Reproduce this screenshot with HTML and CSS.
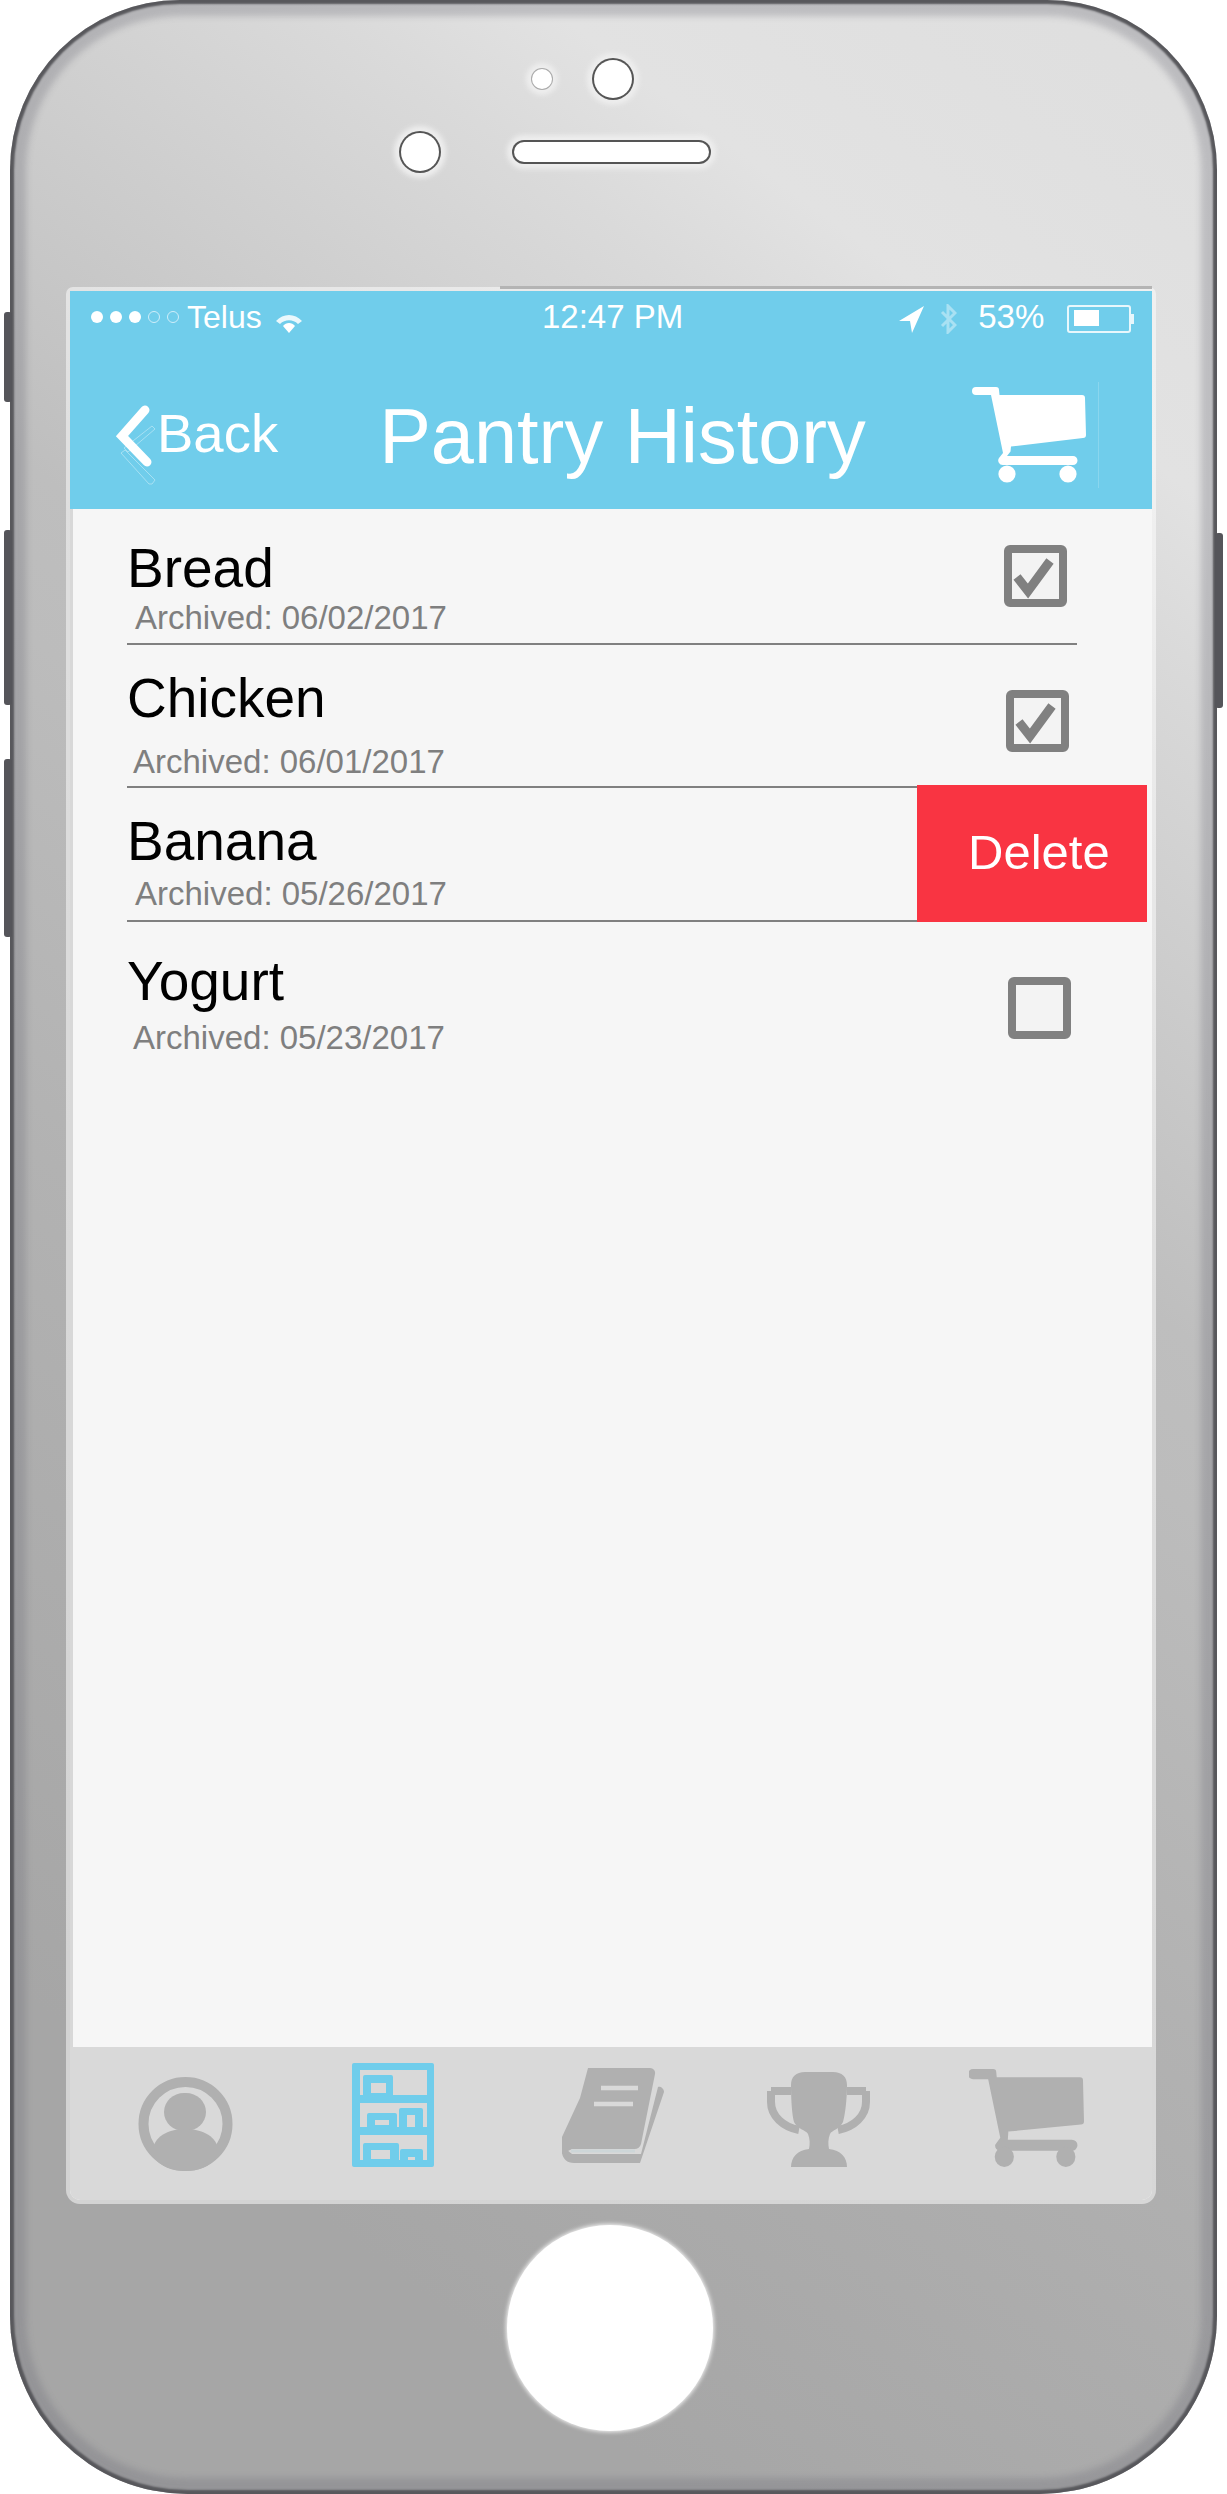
FILE: index.html
```html
<!DOCTYPE html>
<html lang="en">

<head>
    <meta charset="UTF-8">
    <title>Pantry History</title>
    <link rel="stylesheet" href="styles.css">
</head>

<body>
    <div class="side-btn side-btn-mute"></div>
    <div class="side-btn side-btn-up"></div>
    <div class="side-btn side-btn-down"></div>
    <div class="side-btn side-btn-power"></div>
    <div id="phone">
        <div class="bezel-top">
            <div class="sensor-row">
                <div class="sensor sensor-small"></div>
                <div class="sensor sensor-camera"></div>
            </div>
            <div class="sensor-row sensor-row-lower">
                <div class="sensor sensor-front"></div>
                <div class="speaker"></div>
            </div>
        </div>

        <div id="screen">
            <div class="app-header">
                <div class="status-bar">
                    <div class="signal">
                        <span class="dot"></span><span class="dot"></span><span class="dot"></span><span class="dot dot-empty"></span><span class="dot dot-empty"></span>
                    </div>
                    <span class="carrier">Telus</span>
                    <svg class="wifi" viewBox="0 0 26 18">
                        <path d="M0 6 C7 -2 19 -2 26 6 L22 9 C17 4 9 4 4 9 Z" fill="#fff" opacity=".85" />
                        <path d="M7 11 C10 7 16 7 19 11 L13 18 Z" fill="#fff" />
                    </svg>
                    <span class="clock">12:47 PM</span>
                    <svg class="location" viewBox="0 0 25 27">
                        <path d="M25 0 L0 15 L11 15 L13 27 Z" fill="#fff" />
                    </svg>
                    <svg class="bluetooth" viewBox="0 0 17 30">
                        <path d="M2 8 L15 21 L8 28 L8 2 L15 9 L2 22" fill="none" stroke="#fff" stroke-width="3" />
                    </svg>
                    <span class="percent">53%</span>
                    <div class="battery">
                        <div class="battery-fill"></div>
                    </div>
                </div>
                <div class="nav-bar">
                    <svg class="chevron" viewBox="0 0 42 80">
                        <path d="M30 5 L7 31 L32 57" fill="none" stroke="#fff" stroke-width="9" stroke-linecap="round" stroke-linejoin="miter" />
                        <path d="M37 21 l3 3 -27 23 -4-4 z M6 48 l4-3 30 30 -3 4 -3 0 z" fill="none" stroke="#fff" stroke-width=".7" opacity=".55" />
                    </svg>
                    <span class="back">Back</span>
                    <span class="title">Pantry History</span>
                    <svg class="cart-big" viewBox="0 0 114 96">
                        <path d="M4 0h20a3 3 0 0 1 3 3l.5 5H110a3 3 0 0 1 3 3l1 37a3 3 0 0 1-3 3L39 59.5l-.5 5-3.5 4.5h66a4.5 4.5 0 0 1 0 9H31a4.5 4.5 0 0 1-4-7l4-5L19 8H4a4 4 0 0 1 0-8z" fill="#fff" />
                        <circle cx="35" cy="87" r="8.6" fill="#fff" />
                        <circle cx="96" cy="87" r="8.6" fill="#fff" />
                    </svg>
                    <div class="nav-line"></div>
                </div>
            </div>

            <div class="list">
                <div class="item item-bread">
                    <div class="item-text">
                        <div class="item-name">Bread</div>
                        <div class="item-date">Archived: 06/02/2017</div>
                    </div>
                    <div class="check">
                        <svg viewBox="0 0 47 46">
                            <path d="M5 24 L16 38 L38 8" fill="none" stroke="#808080" stroke-width="9" />
                        </svg>
                    </div>
                </div>
                <div class="item item-chicken">
                    <div class="item-text">
                        <div class="item-name">Chicken</div>
                        <div class="item-date">Archived: 06/01/2017</div>
                    </div>
                    <div class="check">
                        <svg viewBox="0 0 47 46">
                            <path d="M5 24 L16 38 L38 8" fill="none" stroke="#808080" stroke-width="9" />
                        </svg>
                    </div>
                </div>
                <div class="item item-banana">
                    <div class="item-text">
                        <div class="item-name">Banana</div>
                        <div class="item-date">Archived: 05/26/2017</div>
                    </div>
                    <div class="delete">Delete</div>
                </div>
                <div class="item item-yogurt">
                    <div class="item-text">
                        <div class="item-name">Yogurt</div>
                        <div class="item-date">Archived: 05/23/2017</div>
                    </div>
                    <div class="check"></div>
                </div>
            </div>

            <div class="tab-bar">
                <svg class="tab-person" viewBox="0 0 95 94">
                    <circle cx="47.5" cy="47" r="42" fill="none" stroke="#b0b0b0" stroke-width="10" />
                    <rect x="26" y="16" width="42" height="38" rx="20" fill="#b0b0b0" />
                    <path d="M15 74 C15 60 30 52 47 52 C65 52 80 60 80 74 L80 79 C72 90 60 94 47 94 C35 94 22 90 15 79 Z" fill="#b0b0b0" />
                </svg>
                <svg class="tab-shelf" viewBox="0 0 82 104">
                    <rect width="82" height="104" rx="2" fill="#70cdeb" />
                    <rect x="8" y="7" width="67" height="25" fill="#d9d9d9" />
                    <rect x="8" y="40" width="67" height="24" fill="#d9d9d9" />
                    <rect x="8" y="72" width="67" height="25" fill="#d9d9d9" />
                    <path d="M11 32V14a2 2 0 0 1 2-2H39a2 2 0 0 1 2 2V32ZM15 64V52a2 2 0 0 1 2-2H43a2 2 0 0 1 2 2V64ZM47 64V47a2 2 0 0 1 2-2H69a2 2 0 0 1 2 2V64ZM11 97V82a2 2 0 0 1 2-2H45a2 2 0 0 1 2 2V97ZM48 97V88a2 2 0 0 1 2-2H69a2 2 0 0 1 2 2V97Z" fill="#70cdeb" />
                    <path d="M19 20H34V30H19ZM23 57H37V62H23ZM55 52H63V64H55ZM19 87H38V96H19ZM56 94H63V97H56Z" fill="#d9d9d9" />
                </svg>
                <svg class="tab-book" viewBox="0 0 102 95">
                    <path d="M26 0H88a5 5 0 0 1 5 6L79 76a7 7 0 0 1-7 5H10L0 86V69L18 30Z" fill="#b0b0b0" />
                    <path d="M0 78V85C1 91 5 95 12 95H78L102 24C102 20 98 18 96 19L79 86H10Z" fill="#b0b0b0" />
                    <path d="M39 20H76M32 36H71" stroke="#d9d9d9" stroke-width="4.5" fill="none" />
                    <path d="M9 83H73" stroke="#cdd6d8" stroke-width="3" fill="none" />
                </svg>
                <svg class="tab-trophy" viewBox="0 0 103 95">
                    <path d="M4 19H24M99 19H80M4 19V30C4 44 16 55 32 58M99 19V30C99 44 87 55 71 58" fill="none" stroke="#b0b0b0" stroke-width="8" />
                    <path d="M38 0H66c9 0 14 5 14 13 0 15-2 30-4 37-3 7-11 8-13 12-2 5-2 10-1 15 12 1 18 9 18 18H24c0-9 6-17 18-18 1-5 1-10-1-15-2-4-11-5-14-12-2-7-3-22-3-37 0-8 5-13 14-13z" fill="#b0b0b0" />
                </svg>
                <svg class="tab-cart" viewBox="0 0 114 97">
                    <path d="M4 0h20a3 3 0 0 1 3 3l.5 5H110a3 3 0 0 1 3 3l1 41a3 3 0 0 1-3 3L39 62l-.5 8H102a5.500 5.500 0 0 1 0 11H31a5 5 0 0 1-5-6l5-7L19 10H4a5 5 0 0 1 0-10z" fill="#b0b0b0" />
                    <ellipse cx="35" cy="87" rx="9.500" ry="10" fill="#b0b0b0" />
                    <ellipse cx="96" cy="87" rx="9.500" ry="10" fill="#b0b0b0" />
                </svg>
            </div>
        </div>

        <div class="bezel-bottom">
            <div class="home-btn"></div>
        </div>
    </div>
</body>

</html>
```
FILE: styles.css
```css
body,
html {
    width: 100%;
    height: 100%;
    padding: 0;
    margin: 0;
    background: #fff;
    overflow: hidden;
}

body {
    position: relative;
    font-family: "Liberation Sans", Arial, sans-serif;
}

/* device */
#phone {
    display: flex;
    flex-direction: column;
    box-sizing: border-box;
    width: 1207px;
    height: 2494px;
    margin-left: 10px;
    padding: 0 65px 0 60px;
    border-radius: 170px 170px 178px 178px;
    background: linear-gradient(217deg,
        #dedede 0,
        #e0e0e0 8%,
        #e2e2e2 15%,
        #dadada 20%,
        #cccccc 30%,
        #bebebe 40%,
        #bcbcbc 45%,
        #b2b2b2 60%,
        #adadad 70%,
        #a6a6a6 85%);
    box-shadow:
        inset 0 0 2px 4px #58585c,
        inset 0 0 6px 16px rgba(110, 110, 120, .3);
}

.side-btn {
    position: absolute;
    width: 8px;
    background: #55555a;
    border-radius: 3px;
}

.side-btn-mute {
    left: 4px;
    top: 312px;
    height: 90px;
}

.side-btn-up {
    left: 4px;
    top: 530px;
    height: 175px;
}

.side-btn-down {
    left: 4px;
    top: 759px;
    height: 178px;
}

.side-btn-power {
    left: 1215px;
    top: 533px;
    height: 175px;
}

.bezel-top {
    flex: none;
    height: 291px;
    box-sizing: border-box;
    padding-top: 59px;
}

.sensor-row {
    display: flex;
    align-items: center;
    height: 40px;
    padding-left: 462px;
    gap: 42px;
}

.sensor-row-lower {
    height: 42px;
    margin-top: 32px;
    padding-left: 331px;
    gap: 75px;
}

.sensor {
    flex: none;
    border-radius: 50%;
    background: #fff;
}

.sensor-small {
    width: 20px;
    height: 20px;
    box-shadow: 0 0 0 1px #aaa, 0 0 5px 6px #eee;
}

.sensor-camera,
.sensor-front {
    width: 38px;
    height: 38px;
    box-shadow: 0 0 0 2px #555, 0 0 5px 7px #eee;
}

.speaker {
    flex: none;
    width: 195px;
    height: 20px;
    border-radius: 10px;
    background: #fff;
    box-shadow: 0 0 0 2px #555, 0 0 5px 7px #eee;
}

#screen {
    flex: none;
    position: relative;
    display: flex;
    flex-direction: column;
    height: 1909px;
    background: #f6f6f6;
    border-radius: 3px 3px 10px 10px;
    box-shadow: 0 0 0 4px rgba(255, 255, 255, .5);
}

/* darker lip along the top of the glass */
#screen::before {
    content: "";
    position: absolute;
    left: 430px;
    right: 0;
    top: -5px;
    height: 3px;
    background: #b4b4b4;
}

.bezel-bottom {
    flex: none;
    display: flex;
    justify-content: center;
    box-sizing: border-box;
    height: 294px;
    padding: 25px 2px 0 0;
}

.home-btn {
    width: 206px;
    height: 206px;
    border-radius: 50%;
    background: #fff;
    box-shadow: 0 0 4px 1px rgba(255, 255, 255, .9);
}

/* header */
.app-header {
    flex: none;
    height: 218px;
    background: #70cdeb;
    color: #fff;
}

.status-bar {
    display: flex;
    align-items: center;
    height: 52px;
    padding-left: 21px;
    font-size: 33px;
    line-height: 52px;
}

.signal {
    display: flex;
    width: 96px;
    gap: 7px;
}

.dot {
    box-sizing: border-box;
    width: 12px;
    height: 12px;
    border-radius: 50%;
    background: #fff;
}

.dot-empty {
    background: none;
    border: 1px solid #cfeefa;
}

.carrier {
    width: 89px;
    font-size: 32px;
}

.wifi {
    width: 26px;
    height: 18px;
    margin-top: 14px;
}

.clock {
    margin-left: 240px;
}

.location {
    width: 25px;
    height: 27px;
    margin: 4px 0 0 216px;
}

.bluetooth {
    width: 17px;
    height: 30px;
    margin: 4px 0 0 16px;
    opacity: .4;
}

.percent {
    margin-left: 21px;
}

.battery {
    position: relative;
    box-sizing: border-box;
    width: 64px;
    height: 28px;
    margin: 3px 0 0 23px;
    padding: 3px 5px;
    border: 2px solid #e8f7fc;
    border-radius: 3px;
}

.battery::after {
    content: "";
    position: absolute;
    right: -5px;
    top: 7px;
    width: 3px;
    height: 10px;
    background: #e8f7fc;
}

.battery-fill {
    width: 25px;
    height: 16px;
    background: #fff;
}

.nav-bar {
    display: flex;
    align-items: flex-start;
    height: 166px;
    white-space: nowrap;
}

.chevron {
    flex: none;
    width: 42px;
    height: 80px;
    margin: 62px 0 0 45px;
}

.back {
    margin-top: 61px;
    font-size: 54.5px;
    line-height: 60px;
}

.title {
    margin: 50px 0 0 101px;
    font-size: 77.5px;
    line-height: 86px;
}

.cart-big {
    flex: none;
    width: 114px;
    height: 96px;
    margin: 44px 0 0 106px;
}

.nav-line {
    flex: none;
    width: 1px;
    height: 106px;
    margin: 39px 0 0 12px;
    background: #8ad6ee;
}

/* list */
.list {
    flex: 1;
    box-shadow: inset 3px 0 0 #d8d8d8;
}

.item {
    position: relative;
    display: flex;
    justify-content: space-between;
    align-items: flex-start;
    margin: 0 75px 0 57px;
    border-bottom: 2px solid #808080;
}

.item-name {
    font-size: 55px;
    line-height: 60px;
    color: #000;
}

.item-date {
    font-size: 33px;
    line-height: 36px;
    color: #7f7f7f;
}

.check {
    flex: none;
    box-sizing: border-box;
    width: 63px;
    height: 62px;
    border: 8px solid #808080;
    border-radius: 6px;
    background: #f3f3f3;
}

.check svg {
    display: block;
    width: 100%;
    height: 100%;
}

.item-bread {
    padding: 29px 0 7px;
}

.item-bread .item-date {
    margin: 2px 0 0 8px;
}

.item-bread .check {
    margin: 7px 10px 0 0;
}

.item-chicken {
    padding: 23px 0 6px;
}

.item-chicken .item-date {
    margin: 16px 0 0 6px;
}

.item-chicken .check {
    margin: 22px 8px 0 0;
}

.item-banana {
    padding: 23px 0 8px;
}

.item-banana .item-date {
    margin: 5px 0 0 8px;
}

.delete {
    position: absolute;
    right: -70px;
    top: -3px;
    bottom: -2px;
    display: flex;
    align-items: center;
    box-sizing: border-box;
    width: 230px;
    padding: 0 0 3px 51px;
    background: #f93442;
    color: #fff;
    font-size: 49px;
}

.item-yogurt {
    padding: 29px 0 8px;
    border-bottom: none;
}

.item-yogurt .item-date {
    margin: 9px 0 0 6px;
}

.item-yogurt .check {
    margin: 26px 6px 0 0;
}

/* tabs */
.tab-bar {
    flex: none;
    display: flex;
    align-items: flex-start;
    height: 153px;
    background: #d9d9d9;
    border-radius: 0 0 10px 10px;
}

.tab-bar svg {
    flex: none;
}

.tab-person {
    width: 95px;
    height: 94px;
    margin: 30px 0 0 68px;
}

.tab-shelf {
    width: 82px;
    height: 104px;
    margin: 16px 0 0 119px;
}

.tab-book {
    width: 102px;
    height: 95px;
    margin: 21px 0 0 128px;
}

.tab-trophy {
    width: 103px;
    height: 95px;
    margin: 25px 0 0 103px;
}

.tab-cart {
    width: 115px;
    height: 98px;
    margin: 22px 0 0 99px;
}
```
